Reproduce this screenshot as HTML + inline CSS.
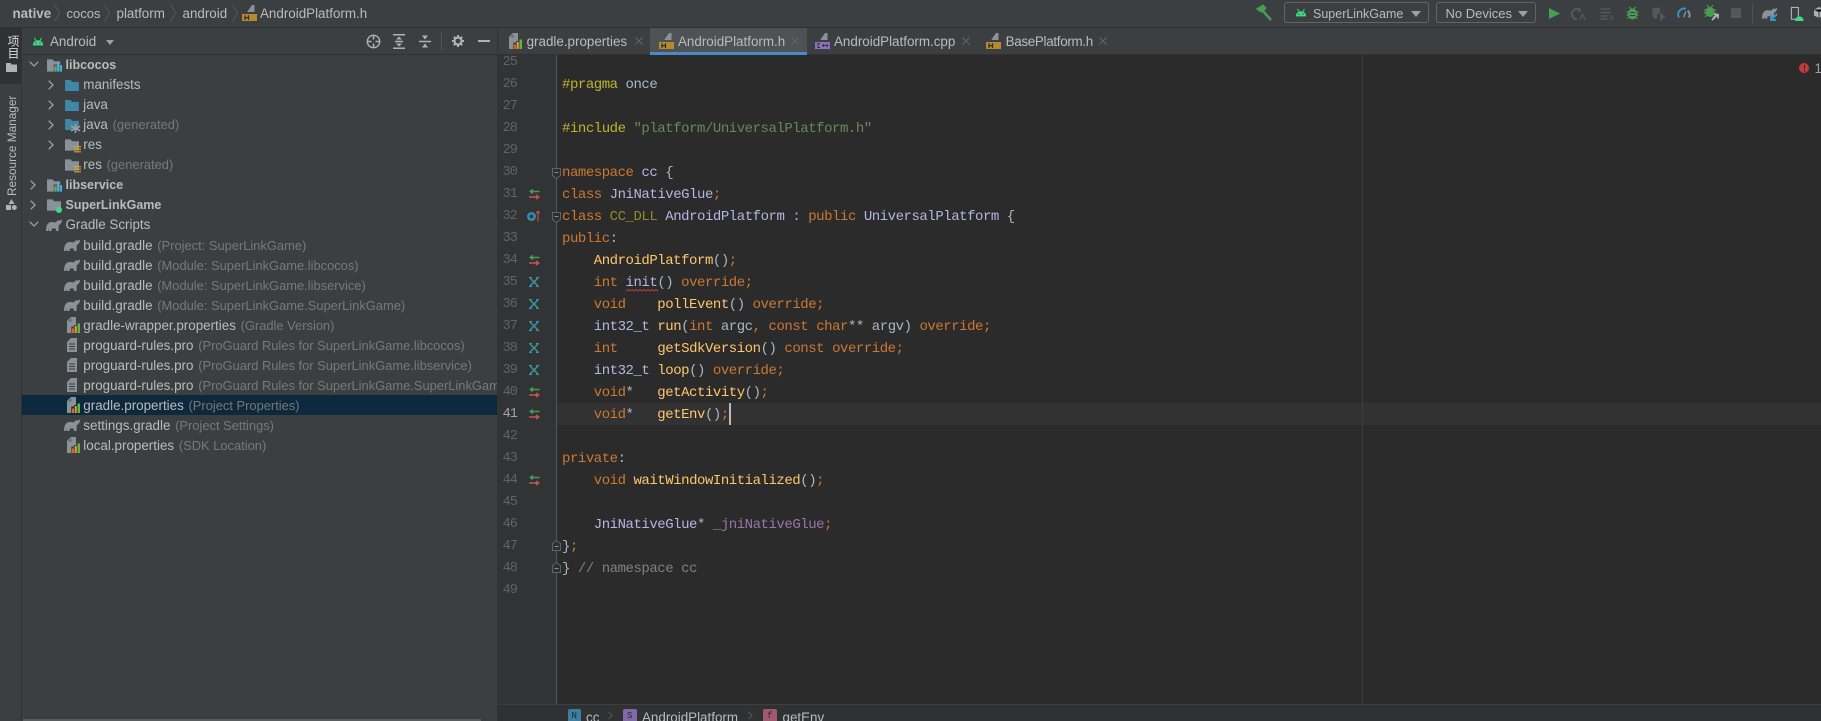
<!DOCTYPE html>
<html><head><meta charset="utf-8"><title>AndroidPlatform.h</title>
<style>
html,body{margin:0;padding:0;background:#3c3f41}
#r{position:relative;width:1821px;height:721px;overflow:hidden;background:#3c3f41;font-family:"Liberation Sans","Noto Sans CJK SC",sans-serif;font-size:13.4px;color:#bbb}
.a{position:absolute}
.t{position:absolute;white-space:pre;line-height:20px;height:20px;margin-top:1px}
.t i{font-style:normal;color:#787878;font-size:12.9px;margin-left:1px}
.b{font-weight:bold;font-size:12.5px}
svg{position:absolute;overflow:visible}
.l{position:absolute;left:562px;height:22px;line-height:22px;margin-top:1px;white-space:pre;font-family:"Liberation Mono",monospace;font-size:14px;letter-spacing:-.46px;color:#a9b7c6}
.n{position:absolute;left:495px;width:22px;text-align:right;height:22px;line-height:22px;margin-top:1px;font-family:"Liberation Mono",monospace;font-size:13.5px;letter-spacing:-.9px;color:#606366}
.k{color:#cc7832}.f{color:#ffc66d}.c{color:#b5b6e3}.p{color:#bbb529}.s{color:#6a8759}.m{color:#908b25}.v{color:#9876aa}.g{color:#808080}
</style></head><body><div id="r">
<svg width="0" height="0" style="position:absolute"><defs>
<symbol id="and" viewBox="0 0 14 10"><path d="M1 9.500C1 5.800 3.500 3.500 7 3.500S13 5.800 13 9.500Z" fill="#3ddc84"/><path d="M3 .8 4.600 3.800M11 .8 9.400 3.800" stroke="#3ddc84" stroke-width="1.100"/><circle cx="4.600" cy="6.800" r=".8" fill="#3c3f41"/><circle cx="9.400" cy="6.800" r=".8" fill="#3c3f41"/></symbol>
<symbol id="fb" viewBox="0 0 15 12"><path d="M0 0H6L7.500 2H15V12H0Z" fill="#3f87a6"/></symbol>
<symbol id="fg" viewBox="0 0 15 12"><path d="M0 0H6L7.500 2H15V12H0Z" fill="#8a9298"/></symbol>
<symbol id="mod" viewBox="0 0 16 13"><path d="M0 0H6L7.500 2H14V5H7V13H0Z" fill="#8a9298"/><path d="M7 5H14V13H7Z" fill="#8a9298" opacity=".5"/><rect x="8" y="8" width="2" height="5" fill="#62b543"/><rect x="11" y="4" width="2" height="9" fill="#40b6e0"/><rect x="14" y="6" width="2" height="7" fill="#40b6e0"/></symbol>
<symbol id="ele" viewBox="0 0 16 12"><path d="M0 12C0 6 2 3 6 3 8 3 9 3.500 10 3.500 10.500 2 12 1 13.500 1.500 14.500 1.800 15.300 1 16 .3L16 2C15.500 4 14 5.500 12.800 6L12.500 12H10L9.700 9.500H6L5.500 12H3L2.800 9.800 2.200 12Z" fill="#8a9298"/></symbol>
<symbol id="prop" viewBox="0 0 13 16"><path d="M0 4 4 0H9V8H7V9.500H4.300V16H0Z" fill="#8a9298"/><path d="M4.500 1 4.500 4.500 1 4.500Z" fill="#3c3f41" opacity=".5"/><rect x="5" y="11.500" width="2" height="4.500" fill="#e8622f"/><rect x="7.700" y="9" width="2" height="7" fill="#e8a22a"/><rect x="10.500" y="6.500" width="2.500" height="9.500" fill="#62b543"/></symbol>
<symbol id="txt" viewBox="0 0 10 14"><path d="M4 0H10V14H0V4Z" fill="#8a9298"/><path d="M2 6H8M2 8.500H8M2 11H8" stroke="#3c3f41" stroke-width="1"/></symbol>
<symbol id="hf" viewBox="0 0 15 16"><path d="M5.500 6.500 10 0H12.500V7H5.500Z" fill="#8a9298"/><rect x="0" y="9" width="15" height="7" fill="#b5892f"/><path d="M3 10.200V15M6.500 10.200V15M3 12.600H6.500" stroke="#2b2b2b" stroke-width="1.200"/></symbol>
<symbol id="cf" viewBox="0 0 15 16"><path d="M5.500 6.500 10 0H12.500V7H5.500Z" fill="#8a9298"/><rect x="0" y="9" width="15" height="7" fill="#8e70b8"/><path d="M5 10.500H3V14.500H5M7 12.500H10M8.500 11.200V13.800M10.500 12.500H13.500M12 11.200V13.800" stroke="#2b2b2b" stroke-width=".9" fill="none"/></symbol>
<symbol id="sw" viewBox="0 0 11 10.500"><path d="M10.500 2.500H2M4 .4 1.200 2.500 4 4.600" stroke="#499c54" stroke-width="1.400" fill="none"/><path d="M0 8H9M7 5.900 9.800 8 7 10.100" stroke="#c75450" stroke-width="1.400" fill="none"/></symbol>
<symbol id="ov" viewBox="0 0 10 10"><path d="M1 1 9 9" stroke="#499c54" stroke-width="1.500"/><path d="M9 1 1 9" stroke="#3592c4" stroke-width="1.500"/><path d="M0 .6H3M7 .6H10M0 9.400H3M7 9.400H10" stroke="#3592c4" stroke-width="1.100"/></symbol>
<symbol id="fold" viewBox="0 0 9 11"><path d="M.5 3.500 4.500 .5 8.500 3.500V10.500H.5Z" fill="#2d2e2f" stroke="#606366"/><path d="M2.500 6.500H6.500" stroke="#8a8d8f"/></symbol>
<symbol id="foldb" viewBox="0 0 9 11"><path d="M.5 7.500 4.500 10.500 8.500 7.500V.5H.5Z" fill="#2d2e2f" stroke="#606366"/><path d="M2.500 4.500H6.500" stroke="#8a8d8f"/></symbol>
<symbol id="chevd" viewBox="0 0 10 6"><path d="M.7 .7 5 5 9.300 .7" stroke="#9da0a3" stroke-width="1.300" fill="none"/></symbol>
<symbol id="chevr" viewBox="0 0 6 10"><path d="M.7 .7 5 5 .7 9.300" stroke="#9da0a3" stroke-width="1.300" fill="none"/></symbol>
<symbol id="chevdim" viewBox="0 0 6 10"><path d="M.7 .7 5 5 .7 9.300" stroke="#5a5d5f" stroke-width="1.100" fill="none"/></symbol>
<symbol id="bc" viewBox="0 0 6 18"><path d="M.5 .5 5.500 9 .5 17.500" stroke="#55585a" stroke-width="1" fill="none"/></symbol>
<symbol id="cl" viewBox="0 0 8 8"><path d="M.5 .5 7.500 7.500M7.500 .5 .5 7.500" stroke="#626567" stroke-width="1.100"/></symbol>
</defs></svg>

<!-- top bar -->
<div class="a" style="left:0;top:27px;width:1821px;height:1px;background:#323232"></div>
<div class="t b" style="left:12.500px;top:3px;font-size:13.400px">native</div>
<svg style="left:54px;top:4px" width="6" height="18"><use href="#bc"/></svg>
<div class="t" style="left:66.500px;top:3px;font-size:13px">cocos</div>
<svg style="left:104px;top:4px" width="6" height="18"><use href="#bc"/></svg>
<div class="t" style="left:116.500px;top:3px">platform</div>
<svg style="left:170px;top:4px" width="6" height="18"><use href="#bc"/></svg>
<div class="t" style="left:182.500px;top:3px">android</div>
<svg style="left:232px;top:4px" width="6" height="18"><use href="#bc"/></svg>
<svg style="left:242px;top:5px" width="15" height="16"><use href="#hf"/></svg>
<div class="t" style="left:260px;top:3px">AndroidPlatform.h</div>

<!-- toolbar -->
<svg style="left:1257px;top:5px" width="15" height="16" viewBox="0 0 15 16"><path d="M1 4 6 1 8 3 5.500 6.500 3 5.500ZM5 5 14 15" stroke="#499c54" stroke-width="2.500" fill="#499c54"/></svg>
<div class="a" style="left:1284px;top:2px;width:145px;height:21px;border:1px solid #646464;border-radius:3px;box-sizing:border-box"></div>
<svg style="left:1295px;top:8px" width="12" height="9"><use href="#and"/></svg>
<div class="t" style="left:1313px;top:3px;font-size:12.500px">SuperLinkGame</div>
<div class="a" style="left:1411px;top:11px;border-left:5px solid transparent;border-right:5px solid transparent;border-top:6px solid #9da0a3"></div>
<div class="a" style="left:1436px;top:2px;width:100px;height:21px;border:1px solid #646464;border-radius:3px;box-sizing:border-box"></div>
<div class="t" style="left:1445.500px;top:3px;font-size:13px">No Devices</div>
<div class="a" style="left:1518px;top:11px;border-left:5px solid transparent;border-right:5px solid transparent;border-top:6px solid #9da0a3"></div>
<svg style="left:1549px;top:8px" width="11" height="11" viewBox="0 0 10 12" preserveAspectRatio="none"><path d="M0 0 10 6 0 12Z" fill="#499c54"/></svg>
<svg style="left:1573px;top:7px" width="13" height="14" viewBox="0 0 13 14"><path d="M6 2.500A5 5 0 1 0 4 12" stroke="#55585a" stroke-width="2" fill="none"/><path d="M5 0 9 3 5 6Z" fill="#55585a"/><path d="M7 13 9.500 7 12 13" stroke="#55585a" stroke-width="1.300" fill="none"/></svg>
<svg style="left:1600px;top:8px" width="14" height="12" viewBox="0 0 13 12"><path d="M0 1H10M0 4.500H10M0 8H7M0 11H7" stroke="#55585a" stroke-width="1.500"/><path d="M9 8 11.500 8 12 11H9.500" stroke="#55585a" fill="none"/></svg>
<svg style="left:1626px;top:6px" width="13" height="14" viewBox="0 0 12 14"><ellipse cx="6" cy="8" rx="4.500" ry="5.500" fill="#499c54"/><path d="M3 1 5 3.500M9 1 7 3.500M0 6H12M0 9H12M1 12.500 3 11M11 12.500 9 11" stroke="#499c54" stroke-width="1.200"/><path d="M3.500 6.500H8.500M3.500 9.500H8.500" stroke="#3c3f41"/></svg>
<svg style="left:1651px;top:7px" width="15" height="14" viewBox="0 0 15 15"><path d="M1 1H9V6L6 8.500V12L4.500 13C2 12 1 10 1 7Z" fill="#55585a"/><path d="M9 6 15 10.500 9 15Z" fill="#55585a"/></svg>
<svg style="left:1677px;top:7px" width="14" height="11" viewBox="0 0 14 12"><path d="M1.500 11.500A6.500 6.500 0 0 1 9 2" stroke="#3592c4" stroke-width="2.200" fill="none"/><path d="M11 4A6.500 6.500 0 0 1 12.500 11.500" stroke="#8a9298" stroke-width="2.200" fill="none"/><path d="M6.500 11 9 5" stroke="#8a9298" stroke-width="1.500"/></svg>
<svg style="left:1704px;top:5px" width="15" height="16" viewBox="0 0 15 16"><ellipse cx="6" cy="7" rx="4.500" ry="5" fill="#499c54"/><path d="M3 0 5 2.500M9 0 7 2.500M0 5H12M0 8H12M1 12 3 10M10 12 9 11" stroke="#499c54" stroke-width="1.200"/><path d="M8 15 13 10M10 9.500H14V13.500" stroke="#bbb" stroke-width="1.600" fill="none"/></svg>
<div class="a" style="left:1731px;top:8px;width:10px;height:10px;background:#55585a"></div>
<div class="a" style="left:1752px;top:3px;width:1px;height:20px;background:#4e5052"></div>
<svg style="left:1762px;top:7px" width="15" height="12"><use href="#ele"/></svg>
<svg style="left:1770px;top:13px" width="8" height="8" viewBox="0 0 8 8"><path d="M7 1 2 6M1 2V7H6" stroke="#3592c4" stroke-width="2" fill="none"/></svg>
<svg style="left:1790px;top:7px" width="14" height="14" viewBox="0 0 14 15"><path d="M1 .500H8.500V13H1Z" stroke="#afb1b3" stroke-width="1.200" fill="none"/><path d="M5 15C5 12 7 10 9.500 10S14 12 14 15Z" fill="#3ddc84"/></svg>
<svg style="left:1814px;top:7px" width="10" height="11" viewBox="0 0 10 11"><path d="M5 0 10 2.500V8.500L5 11 0 8.500V2.500Z" fill="#afb1b3"/><path d="M0 2.500 5 5 10 2.500M5 5V11" stroke="#3c3f41"/></svg>

<!-- left strip -->
<div class="a" style="left:0;top:28px;width:21px;height:56px;background:#2f3133"></div>
<div class="a" style="left:21px;top:28px;width:1px;height:693px;background:#323232"></div>
<div class="a" style="left:5px;top:35px;width:14px;height:24px;color:#ddd;font-size:12px;line-height:13px;writing-mode:vertical-rl">项目</div>
<svg style="left:6px;top:63px" width="11" height="9" viewBox="0 0 11 9"><path d="M0 0H4.500L5.500 1.500H11V9H0Z" fill="#afb1b3"/></svg>
<div class="a" style="left:4px;top:96px;height:100px;width:16px;line-height:16px;font-size:11.800px;white-space:pre;writing-mode:vertical-rl;transform:rotate(180deg)">Resource Manager</div>
<svg style="left:6px;top:199px" width="11" height="11" viewBox="0 0 11 11"><path d="M5.500 0 8.500 5H2.500Z" fill="#afb1b3"/><rect x="0" y="6" width="5" height="5" fill="#afb1b3"/><circle cx="8.300" cy="8.500" r="2.500" fill="#afb1b3"/></svg>

<!-- sidebar header -->
<svg style="left:32px;top:37px" width="12" height="9"><use href="#and"/></svg>
<div class="t" style="left:50px;top:31px">Android</div>
<div class="a" style="left:106px;top:40px;border-left:4px solid transparent;border-right:4px solid transparent;border-top:5px solid #9da0a3"></div>
<svg style="left:365.500px;top:34px" width="15" height="15" viewBox="0 0 15 15"><circle cx="7.500" cy="7.500" r="6.200" stroke="#afb1b3" stroke-width="1.400" fill="none"/><path d="M7.500 1V5.500M7.500 9.500V14M1 7.500H5.500M9.500 7.500H14" stroke="#afb1b3" stroke-width="1.500"/></svg>
<svg style="left:393px;top:34px" width="12" height="15" viewBox="0 0 12 15"><path d="M0 .8H12M0 14.200H12M2 7.500H10" stroke="#afb1b3" stroke-width="1.500"/><path d="M6 2.500 9 5.500H3ZM6 12.500 9 9.500H3Z" fill="#afb1b3"/></svg>
<svg style="left:419px;top:34px" width="12" height="15" viewBox="0 0 12 15"><path d="M0 7.500H12" stroke="#afb1b3" stroke-width="1.500"/><path d="M6 5.500 9 1.500H3ZM6 9.500 9 13.500H3Z" fill="#afb1b3"/></svg>
<div class="a" style="left:441px;top:32px;width:1px;height:19px;background:#515456"></div>
<svg style="left:452px;top:35px" width="12" height="12" viewBox="0 0 12 12"><circle cx="6" cy="6" r="3.500" stroke="#afb1b3" stroke-width="2.200" fill="none"/><path d="M6 0V2.500M6 9.500V12M0 6H2.500M9.500 6H12M1.800 1.800 3.500 3.500M8.500 8.500 10.200 10.200M1.800 10.200 3.500 8.500M8.500 3.500 10.200 1.800" stroke="#afb1b3" stroke-width="2"/></svg>
<div class="a" style="left:478px;top:40px;width:12px;height:2px;background:#afb1b3"></div>
<div class="a" style="left:22px;top:54px;width:475px;height:1px;background:#323232"></div>

<!-- tree -->
<div class="a" style="left:22px;top:395px;width:475px;height:20px;background:#0d293e"></div>
<svg style="left:29px;top:61px" width="10" height="6"><use href="#chevd"/></svg>
<svg style="left:47px;top:59px" width="15" height="13"><use href="#mod"/></svg>
<div class="t b" style="left:65.500px;top:54px">libcocos</div>
<svg style="left:48px;top:80px" width="6" height="10"><use href="#chevr"/></svg>
<svg style="left:65px;top:80px" width="14" height="11"><use href="#fb"/></svg>
<div class="t" style="left:83.300px;top:74px">manifests</div>
<svg style="left:48px;top:100px" width="6" height="10"><use href="#chevr"/></svg>
<svg style="left:65px;top:100px" width="14" height="11"><use href="#fb"/></svg>
<div class="t" style="left:83.300px;top:94px">java</div>
<svg style="left:48px;top:120px" width="6" height="10"><use href="#chevr"/></svg>
<svg style="left:65px;top:119px" width="14" height="11"><use href="#fb"/></svg>
<svg style="left:71px;top:124px" width="9" height="9" viewBox="0 0 9 9"><path d="M4.500 0V9M0 2.200 9 6.800M9 2.200 0 6.800" stroke="#9aa0a5" stroke-width="1.600"/></svg>
<div class="t" style="left:83.300px;top:114px">java <i>(generated)</i></div>
<svg style="left:48px;top:140px" width="6" height="10"><use href="#chevr"/></svg>
<svg style="left:65px;top:139px" width="14" height="12"><use href="#fg"/></svg>
<svg style="left:73.500px;top:146px" width="7" height="7" viewBox="0 0 7 7"><path d="M0 .7H7M0 3.200H7M0 5.800H7" stroke="#e0a030" stroke-width="1.200"/></svg>
<div class="t" style="left:83.300px;top:134px">res</div>
<svg style="left:65px;top:159px" width="14" height="12"><use href="#fg"/></svg>
<svg style="left:73.500px;top:166px" width="7" height="7" viewBox="0 0 7 7"><path d="M0 .7H7M0 3.200H7M0 5.800H7" stroke="#e0a030" stroke-width="1.200"/></svg>
<div class="t" style="left:83.300px;top:154px">res <i>(generated)</i></div>
<svg style="left:30px;top:180px" width="6" height="10"><use href="#chevr"/></svg>
<svg style="left:47px;top:179px" width="15" height="13"><use href="#mod"/></svg>
<div class="t b" style="left:65.500px;top:174px">libservice</div>
<svg style="left:30px;top:200px" width="6" height="10"><use href="#chevr"/></svg>
<svg style="left:47px;top:199px" width="14" height="12"><use href="#fg"/></svg>
<div class="a" style="left:56px;top:207px;width:6px;height:6px;border-radius:50%;background:#3ddc84"></div>
<div class="t b" style="left:65.500px;top:194px">SuperLinkGame</div>
<svg style="left:29px;top:221px" width="10" height="6"><use href="#chevd"/></svg>
<svg style="left:46px;top:219px" width="16" height="12"><use href="#ele"/></svg>
<div class="t" style="left:65.500px;top:214px">Gradle Scripts</div>
<svg style="left:64px;top:239px" width="16" height="12"><use href="#ele"/></svg>
<div class="t" style="left:83.300px;top:235px">build.gradle <i>(Project: SuperLinkGame)</i></div>
<svg style="left:64px;top:259px" width="16" height="12"><use href="#ele"/></svg>
<div class="t" style="left:83.300px;top:255px">build.gradle <i>(Module: SuperLinkGame.libcocos)</i></div>
<svg style="left:64px;top:279px" width="16" height="12"><use href="#ele"/></svg>
<div class="t" style="left:83.300px;top:275px">build.gradle <i>(Module: SuperLinkGame.libservice)</i></div>
<svg style="left:64px;top:299px" width="16" height="12"><use href="#ele"/></svg>
<div class="t" style="left:83.300px;top:295px">build.gradle <i>(Module: SuperLinkGame.SuperLinkGame)</i></div>
<svg style="left:67px;top:317px" width="13" height="16"><use href="#prop"/></svg>
<div class="t" style="left:83.300px;top:315px">gradle-wrapper.properties <i>(Gradle Version)</i></div>
<svg style="left:67px;top:338px" width="10" height="14"><use href="#txt"/></svg>
<div class="t" style="left:83.300px;top:335px">proguard-rules.pro <i>(ProGuard Rules for SuperLinkGame.libcocos)</i></div>
<svg style="left:67px;top:358px" width="10" height="14"><use href="#txt"/></svg>
<div class="t" style="left:83.300px;top:355px">proguard-rules.pro <i>(ProGuard Rules for SuperLinkGame.libservice)</i></div>
<svg style="left:67px;top:378px" width="10" height="14"><use href="#txt"/></svg>
<div class="a" style="left:83.300px;top:375px;width:414px;height:21px;overflow:hidden"><div class="t" style="left:0;top:0">proguard-rules.pro <i>(ProGuard Rules for SuperLinkGame.SuperLinkGame)</i></div></div>
<svg style="left:67px;top:397px" width="13" height="16"><use href="#prop"/></svg>
<div class="t" style="left:83.300px;top:395px">gradle.properties <i>(Project Properties)</i></div>
<svg style="left:64px;top:419px" width="16" height="12"><use href="#ele"/></svg>
<div class="t" style="left:83.300px;top:415px">settings.gradle <i>(Project Settings)</i></div>
<svg style="left:67px;top:437px" width="13" height="16"><use href="#prop"/></svg>
<div class="t" style="left:83.300px;top:435px">local.properties <i>(SDK Location)</i></div>
<div class="a" style="left:23px;top:719px;width:458px;height:2px;background:#5a5d5f"></div>

<!-- editor -->
<div class="a" style="left:497px;top:28px;width:1px;height:693px;background:#323232"></div>
<div class="a" style="left:498px;top:55px;width:59px;height:649px;background:#313335"></div>
<div class="a" style="left:557px;top:55px;width:1264px;height:649px;background:#2b2b2b"></div>
<div class="a" style="left:556px;top:55px;width:1px;height:649px;background:#555"></div>
<div class="a" style="left:557px;top:403px;width:1264px;height:22px;background:#323232"></div>
<div class="a" style="left:1362px;top:55px;width:1px;height:649px;background:#3d3d3d"></div>

<!-- tabs -->
<div class="a" style="left:650px;top:28px;width:157px;height:24px;background:#4e5254"></div>
<div class="a" style="left:650px;top:52px;width:157px;height:3px;background:#4a88c7"></div>
<div class="a" style="left:498px;top:54px;width:152px;height:1px;background:#323232"></div>
<div class="a" style="left:807px;top:54px;width:1014px;height:1px;background:#323232"></div>
<svg style="left:509px;top:33px" width="13" height="16"><use href="#prop"/></svg>
<div class="t" style="left:526.600px;top:31px">gradle.properties</div>
<svg style="left:635px;top:37px" width="8" height="8"><use href="#cl"/></svg>
<svg style="left:659px;top:33px" width="15" height="16"><use href="#hf"/></svg>
<div class="t" style="left:678px;top:31px">AndroidPlatform.h</div>
<svg style="left:791px;top:37px" width="8" height="8"><use href="#cl"/></svg>
<svg style="left:815px;top:33px" width="15" height="16"><use href="#cf"/></svg>
<div class="t" style="left:834px;top:31px">AndroidPlatform.cpp</div>
<svg style="left:962px;top:37px" width="8" height="8"><use href="#cl"/></svg>
<svg style="left:986px;top:33px" width="15" height="16"><use href="#hf"/></svg>
<div class="t" style="left:1005.600px;top:31px;letter-spacing:-.3px">BasePlatform.h</div>
<svg style="left:1099px;top:37px" width="8" height="8"><use href="#cl"/></svg>

<!-- line numbers -->
<div class="a" style="left:0;top:55px;width:1821px;height:649px;overflow:hidden"><div class="a" style="left:0;top:-55px;width:1821px;height:721px">
<div class="n" style="top:51px">25</div><div class="n" style="top:73px">26</div><div class="n" style="top:95px">27</div><div class="n" style="top:117px">28</div><div class="n" style="top:139px">29</div><div class="n" style="top:161px">30</div><div class="n" style="top:183px">31</div><div class="n" style="top:205px">32</div><div class="n" style="top:227px">33</div><div class="n" style="top:249px">34</div><div class="n" style="top:271px">35</div><div class="n" style="top:293px">36</div><div class="n" style="top:315px">37</div><div class="n" style="top:337px">38</div><div class="n" style="top:359px">39</div><div class="n" style="top:381px">40</div><div class="n" style="top:403px;color:#a4a3a3">41</div><div class="n" style="top:425px">42</div><div class="n" style="top:447px">43</div><div class="n" style="top:469px">44</div><div class="n" style="top:491px">45</div><div class="n" style="top:513px">46</div><div class="n" style="top:535px">47</div><div class="n" style="top:557px">48</div><div class="n" style="top:579px">49</div>
</div></div>

<!-- gutter icons -->
<svg style="left:529px;top:189px" width="11" height="10.500"><use href="#sw"/></svg>
<svg style="left:527px;top:211.500px" width="9" height="9" viewBox="0 0 9 9"><circle cx="4.500" cy="4.500" r="3.300" stroke="#3a8fb7" stroke-width="2.200" fill="#2f4a58"/><circle cx="4.500" cy="4.500" r="1" fill="#313335"/></svg>
<svg style="left:536px;top:209px" width="4" height="14" viewBox="0 0 5 14"><path d="M2.500 14V1M.3 3.500 2.500 .8 4.700 3.500" stroke="#c75450" stroke-width="1.300" fill="none"/></svg>
<svg style="left:529px;top:255px" width="11" height="10.500"><use href="#sw"/></svg>
<svg style="left:529px;top:277px" width="10" height="10"><use href="#ov"/></svg>
<svg style="left:529px;top:299px" width="10" height="10"><use href="#ov"/></svg>
<svg style="left:529px;top:321px" width="10" height="10"><use href="#ov"/></svg>
<svg style="left:529px;top:343px" width="10" height="10"><use href="#ov"/></svg>
<svg style="left:529px;top:365px" width="10" height="10"><use href="#ov"/></svg>
<svg style="left:529px;top:387px" width="11" height="10.500"><use href="#sw"/></svg>
<svg style="left:529px;top:409px" width="11" height="10.500"><use href="#sw"/></svg>
<svg style="left:529px;top:475px" width="11" height="10.500"><use href="#sw"/></svg>
<svg style="left:552px;top:168px" width="9" height="11"><use href="#foldb"/></svg>
<svg style="left:552px;top:212px" width="9" height="11"><use href="#foldb"/></svg>
<svg style="left:552px;top:540px" width="9" height="11"><use href="#fold"/></svg>
<svg style="left:552px;top:562px" width="9" height="11"><use href="#fold"/></svg>

<!-- code -->
<div class="l" style="top:73px"><span class="p">#pragma</span> once</div>
<div class="l" style="top:117px"><span class="p">#include</span> <span class="s">"platform/UniversalPlatform.h"</span></div>
<div class="l" style="top:161px"><span class="k">namespace</span> <span class="c">cc</span> {</div>
<div class="l" style="top:183px"><span class="k">class</span> <span class="c">JniNativeGlue</span><span class="k">;</span></div>
<div class="l" style="top:205px"><span class="k">class</span> <span class="m">CC_DLL</span> <span class="c">AndroidPlatform</span> : <span class="k">public</span> <span class="c">UniversalPlatform</span> {</div>
<div class="l" style="top:227px"><span class="k">public</span>:</div>
<div class="l" style="top:249px">    <span class="f">AndroidPlatform</span>()<span class="k">;</span></div>
<div class="l" style="top:271px">    <span class="k">int</span> <span class="c">init</span>() <span class="k">override;</span></div>
<div class="l" style="top:293px">    <span class="k">void</span>    <span class="f">pollEvent</span>() <span class="k">override;</span></div>
<div class="l" style="top:315px">    <span class="c">int32_t</span> <span class="f">run</span>(<span class="k">int</span> argc<span class="k">,</span> <span class="k">const</span> <span class="k">char</span>** argv) <span class="k">override;</span></div>
<div class="l" style="top:337px">    <span class="k">int</span>     <span class="f">getSdkVersion</span>() <span class="k">const</span> <span class="k">override;</span></div>
<div class="l" style="top:359px">    <span class="c">int32_t</span> <span class="f">loop</span>() <span class="k">override;</span></div>
<div class="l" style="top:381px">    <span class="k">void</span>*   <span class="f">getActivity</span>()<span class="k">;</span></div>
<div class="l" style="top:403px">    <span class="k">void</span>*   <span class="f">getEnv</span>()<span class="k">;</span></div>
<div class="l" style="top:447px"><span class="k">private</span>:</div>
<div class="l" style="top:469px">    <span class="k">void</span> <span class="f">waitWindowInitialized</span>()<span class="k">;</span></div>
<div class="l" style="top:513px">    <span class="c">JniNativeGlue</span>* <span class="v">_jniNativeGlue</span><span class="k">;</span></div>
<div class="l" style="top:535px">}<span class="k">;</span></div>
<div class="l" style="top:557px">} <span class="g">// namespace cc</span></div>
<svg style="left:626px;top:289px" width="32" height="3" viewBox="0 0 32 3"><path d="M0 2 2 .5 4 2 6 .5 8 2 10 .5 12 2 14 .5 16 2 18 .5 20 2 22 .5 24 2 26 .5 28 2 30 .5 32 2" stroke="#bc3f3c" fill="none"/></svg>
<div class="a" style="left:729px;top:403px;width:2px;height:22px;background:#bbb"></div>

<!-- error indicator -->
<div class="a" style="left:1799px;top:63px;width:10px;height:10px;border-radius:50%;background:#c03b3b"></div>
<div class="a" style="left:1803.500px;top:65px;width:1.500px;height:4px;background:#2b2b2b"></div>
<div class="a" style="left:1803.500px;top:70px;width:1.500px;height:1.500px;background:#2b2b2b"></div>
<div class="t" style="left:1814.500px;top:58px;color:#9da0a3">1</div>

<!-- breadcrumb -->
<div class="a" style="left:498px;top:704px;width:1323px;height:17px;background:#2f3133;border-top:1px solid #3c3f41;box-sizing:border-box;overflow:hidden">
<div class="a" style="left:69.500px;top:4px;width:13.500px;height:14px;border-radius:2px;background:#3d7f9e;color:#1e2a30;font:9px/14px 'Liberation Mono',monospace;text-align:center">N</div>
<div class="t" style="left:88px;top:2px">cc</div>
<svg style="left:110px;top:6px" width="5" height="9"><use href="#chevdim"/></svg>
<div class="a" style="left:125px;top:4px;width:13.500px;height:14px;border-radius:2px;background:#7f6aa5;color:#2a2435;font:9px/14px 'Liberation Mono',monospace;text-align:center">S</div>
<div class="t" style="left:144px;top:2px">AndroidPlatform</div>
<svg style="left:250px;top:6px" width="5" height="9"><use href="#chevdim"/></svg>
<div class="a" style="left:265px;top:4px;width:13.500px;height:14px;border-radius:2px;background:#a05a6e;color:#34202a;font:9px/14px 'Liberation Mono',monospace;text-align:center">f</div>
<div class="t" style="left:284.500px;top:2px">getEnv</div>
</div>
</div></body></html>
